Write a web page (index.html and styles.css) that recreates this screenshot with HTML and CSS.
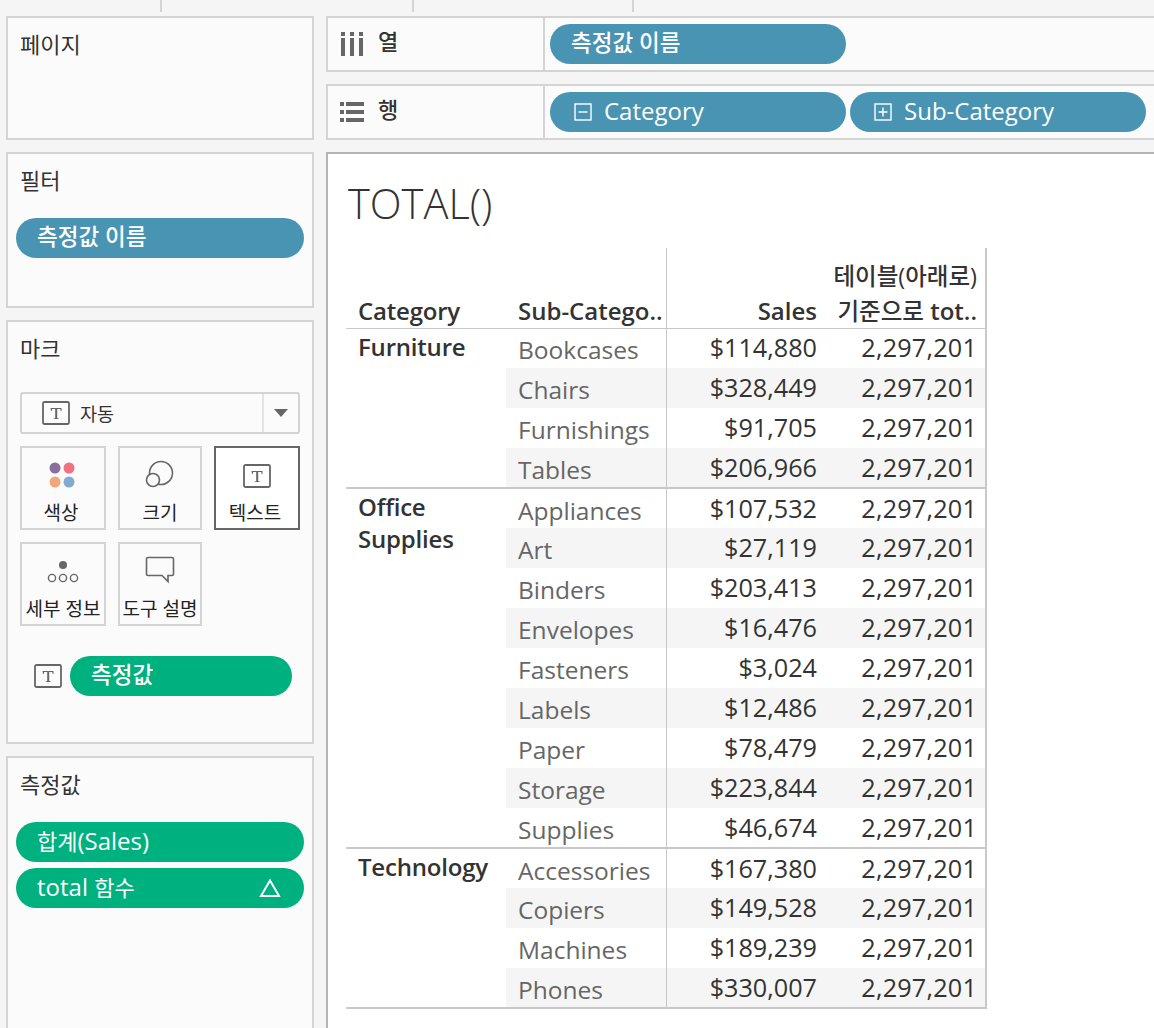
FILE: index.html
```html
<!DOCTYPE html>
<html lang="ko">

<head>
    <meta charset="UTF-8">
    <title>TOTAL()</title>
    <link rel="stylesheet" href="styles.css">
</head>

<body>
    <div class="ticks">
        <span class="tick t1"></span>
        <span class="tick t2"></span>
        <span class="tick t3"></span>
    </div>

    <div class="workspace">
        <aside class="side">
            <section class="card card-page">
                <h2>페이지</h2>
            </section>

            <section class="card card-filter">
                <h2>필터</h2>
                <div class="pill blue bold">측정값 이름</div>
            </section>

            <section class="card card-marks">
                <h2>마크</h2>
                <div class="mark-select">
                    <div class="mark-select-main">
                        <svg class="t-icon" width="28" height="24" viewBox="0 0 28 24"><use href="#t-box"/></svg>
                        <span>자동</span>
                    </div>
                    <div class="mark-select-arrow"><span class="arrow"></span></div>
                </div>
                <div class="mark-grid">
                    <div class="mark-btn">
                        <svg width="30" height="26" viewBox="0 0 30 26">
                            <circle cx="7" cy="6" r="5.5" fill="#8a6f9c"/>
                            <circle cx="21" cy="6" r="5.5" fill="#f2707f"/>
                            <circle cx="7" cy="20" r="5.5" fill="#f2a67c"/>
                            <circle cx="21" cy="20" r="5.5" fill="#82a9cf"/>
                        </svg>
                        <span class="shift">색상</span>
                    </div>
                    <div class="mark-btn">
                        <svg width="30" height="28" viewBox="0 0 30 28" fill="none" stroke="#666" stroke-width="1.6">
                            <circle cx="16" cy="13" r="11.5"/>
                            <circle cx="8" cy="20" r="6.5" fill="#fbfbfb"/>
                        </svg>
                        <span>크기</span>
                    </div>
                    <div class="mark-btn active">
                        <svg class="t-icon" width="28" height="24" viewBox="0 0 28 24"><use href="#t-box"/></svg>
                        <span class="shift">텍스트</span>
                    </div>
                    <div class="mark-btn">
                        <svg width="32" height="24" viewBox="0 0 32 24" fill="none" stroke="#666" stroke-width="1.4">
                            <circle cx="16" cy="5" r="4" fill="#666" stroke="none"/>
                            <circle cx="5" cy="18" r="3.6"/>
                            <circle cx="16" cy="18" r="3.6"/>
                            <circle cx="27" cy="18" r="3.6"/>
                        </svg>
                        <span>세부 정보</span>
                    </div>
                    <div class="mark-btn">
                        <svg width="30" height="28" viewBox="0 0 30 28" fill="none" stroke="#666" stroke-width="1.6">
                            <path d="M3 1.5h24a1.5 1.5 0 0 1 1.500 1.500v15a1.500 1.500 0 0 1-1.500 1.500h-4v6l-6-6H3a1.500 1.500 0 0 1-1.500-1.500V3A1.500 1.500 0 0 1 3 1.500z"/>
                        </svg>
                        <span>도구 설명</span>
                    </div>
                </div>
                <div class="mark-field">
                    <svg class="t-icon" width="28" height="24" viewBox="0 0 28 24"><use href="#t-box"/></svg>
                    <div class="pill green bold">측정값</div>
                </div>
            </section>

            <section class="card card-values">
                <h2>측정값</h2>
                <div class="pill green"><span><span class="ko">합계</span>(Sales)</span></div>
                <div class="pill green">
                    <span>total <span class="ko">함수</span></span>
                    <svg class="delta" width="22" height="20" viewBox="0 0 22 20" fill="none" stroke="#fff" stroke-width="2">
                        <path d="M11 2.500L20 18H2z"/>
                    </svg>
                </div>
            </section>
        </aside>

        <main class="content">
            <div class="shelf">
                <div class="shelf-label">
                    <svg width="24" height="24" viewBox="-1 0 24 24" fill="#666">
                        <rect x="0" y="0" width="4" height="4"/><rect x="0" y="6" width="4" height="18"/>
                        <rect x="9" y="0" width="4" height="4"/><rect x="9" y="6" width="4" height="18"/>
                        <rect x="18" y="0" width="4" height="4"/><rect x="18" y="6" width="4" height="18"/>
                    </svg>
                    <span>열</span>
                </div>
                <div class="shelf-pills">
                    <div class="pill blue bold">측정값 이름</div>
                </div>
            </div>

            <div class="shelf">
                <div class="shelf-label">
                    <svg width="24" height="20" viewBox="0 0 24 20" fill="#666">
                        <rect x="0" y="0" width="4" height="4"/><rect x="6" y="0" width="18" height="4"/>
                        <rect x="0" y="8" width="4" height="4"/><rect x="6" y="8" width="18" height="4"/>
                        <rect x="0" y="16" width="4" height="4"/><rect x="6" y="16" width="18" height="4"/>
                    </svg>
                    <span>행</span>
                </div>
                <div class="shelf-pills">
                    <div class="pill blue">
                        <svg class="fold" width="18" height="18" viewBox="0 0 18 18" fill="none" stroke="#fff" stroke-width="1.4">
                            <rect x="1" y="1" width="16" height="16"/><path d="M4.500 9h9"/>
                        </svg>
                        Category
                    </div>
                    <div class="pill blue">
                        <svg class="fold" width="18" height="18" viewBox="0 0 18 18" fill="none" stroke="#fff" stroke-width="1.4">
                            <rect x="1" y="1" width="16" height="16"/><path d="M4.500 9h9M9 4.500v9"/>
                        </svg>
                        Sub-Category
                    </div>
                </div>
            </div>

            <section class="view">
                <h1>TOTAL()</h1>
                <table class="crosstab">
                    <thead>
                        <tr>
                            <th class="cat">Category</th>
                            <th class="sub">Sub-Catego..</th>
                            <th class="num">Sales</th>
                            <th class="num"><span class="head-line">테이블(아래로)</span><span class="ko-head">기준으로</span> tot..</th>
                        </tr>
                    </thead>
                    <tbody>
                        <tr><td class="cat" rowspan="4">Furniture</td><td class="sub">Bookcases</td><td class="num">$114,880</td><td class="num">2,297,201</td></tr>
                        <tr class="band"><td class="sub">Chairs</td><td class="num">$328,449</td><td class="num">2,297,201</td></tr>
                        <tr><td class="sub">Furnishings</td><td class="num">$91,705</td><td class="num">2,297,201</td></tr>
                        <tr class="band"><td class="sub">Tables</td><td class="num">$206,966</td><td class="num">2,297,201</td></tr>
                    </tbody>
                    <tbody>
                        <tr><td class="cat" rowspan="9">Office<br>Supplies</td><td class="sub">Appliances</td><td class="num">$107,532</td><td class="num">2,297,201</td></tr>
                        <tr class="band"><td class="sub">Art</td><td class="num">$27,119</td><td class="num">2,297,201</td></tr>
                        <tr><td class="sub">Binders</td><td class="num">$203,413</td><td class="num">2,297,201</td></tr>
                        <tr class="band"><td class="sub">Envelopes</td><td class="num">$16,476</td><td class="num">2,297,201</td></tr>
                        <tr><td class="sub">Fasteners</td><td class="num">$3,024</td><td class="num">2,297,201</td></tr>
                        <tr class="band"><td class="sub">Labels</td><td class="num">$12,486</td><td class="num">2,297,201</td></tr>
                        <tr><td class="sub">Paper</td><td class="num">$78,479</td><td class="num">2,297,201</td></tr>
                        <tr class="band"><td class="sub">Storage</td><td class="num">$223,844</td><td class="num">2,297,201</td></tr>
                        <tr><td class="sub">Supplies</td><td class="num">$46,674</td><td class="num">2,297,201</td></tr>
                    </tbody>
                    <tbody>
                        <tr><td class="cat" rowspan="4">Technology</td><td class="sub">Accessories</td><td class="num">$167,380</td><td class="num">2,297,201</td></tr>
                        <tr class="band"><td class="sub">Copiers</td><td class="num">$149,528</td><td class="num">2,297,201</td></tr>
                        <tr><td class="sub">Machines</td><td class="num">$189,239</td><td class="num">2,297,201</td></tr>
                        <tr class="band"><td class="sub">Phones</td><td class="num">$330,007</td><td class="num">2,297,201</td></tr>
                    </tbody>
                </table>
            </section>
        </main>
    </div>

    <svg class="defs" width="0" height="0">
        <symbol id="t-box" viewBox="0 0 28 24">
            <rect x="1" y="1" width="26" height="22" rx="1.500" fill="none" stroke="#666" stroke-width="1.800"/>
            <path d="M8.500 7h11v3h-.8l-.5-2h-3v9l1.500.5v.5h-5v-.5l1.500-.5V8h-3l-.5 2h-.7z" fill="#666"/>
        </symbol>
    </svg>
</body>

</html>
```

FILE: styles.css
```css
* {
    box-sizing: border-box;
}

html,
body {
    height: 100%;
}

body {
    margin: 0;
    height: 1028px;
    overflow: hidden;
    background-color: #f5f5f5;
    color: #333;
    font-family: "Open Sans", "Noto Sans CJK KR", sans-serif;
    font-size: 24px;
}

.defs {
    display: block;
}

.ticks {
    display: flex;
    height: 16px;
}

.tick {
    width: 2px;
    height: 12px;
    background-color: #d4d4d4;
}

.t1 {
    margin-left: 160px;
}

.t2 {
    margin-left: 250px;
}

.t3 {
    margin-left: 218px;
}

.workspace {
    display: grid;
    grid-template-columns: 308px 1fr;
    column-gap: 12px;
    padding-left: 6px;
    height: 1012px;
}

/* left column */
.side {
    display: flex;
    flex-direction: column;
    gap: 12px;
    min-height: 0;
}

.card {
    background-color: #fbfbfb;
    border: 2px solid #d4d4d4;
    padding: 0 8px;
}

.card h2 {
    margin: 0;
    padding: 10px 4px 0;
    font-size: 22px;
    line-height: 32px;
    font-weight: 400;
    color: #333;
}

.card-page {
    height: 124px;
}

.card-filter {
    height: 156px;
}

.card-filter .pill {
    margin-top: 22px;
}

.card-marks {
    height: 424px;
}

.card-values {
    flex: 1;
    border-bottom: 0;
}

.card-values .pill {
    margin-top: 6px;
}

.card-values h2 {
    margin-bottom: 22px;
}

/* pills */
.pill {
    display: flex;
    align-items: center;
    gap: 12px;
    height: 40px;
    padding: 0 0 2px 21px;
    border-radius: 20px;
    color: #fff;
    font-size: 24px;
    line-height: 32px;
    white-space: nowrap;
}

.pill.bold {
    font-size: 22.500px;
    font-weight: 500;
}

.pill svg {
    margin-top: 2px;
}

.ko {
    font-size: 22px;
}

.blue {
    background-color: #4a94b3;
}

.green {
    background-color: #00b180;
}

.delta {
    margin-left: auto;
    margin-right: 23px;
}

/* marks card */
.mark-select {
    display: flex;
    height: 42px;
    margin: 28px 4px 0;
    border: 2px solid #d4d4d4;
    border-radius: 3px;
    font-size: 18.500px;
}

.mark-select-main {
    display: flex;
    flex: 1;
    align-items: center;
    gap: 10px;
    padding: 0 0 1px 20px;
}

.mark-select-arrow {
    display: flex;
    align-items: center;
    justify-content: center;
    width: 36px;
    border-left: 2px solid #e4e4e4;
}

.arrow {
    border-left: 7px solid transparent;
    border-right: 7px solid transparent;
    border-top: 8px solid #666;
}

.mark-grid {
    display: grid;
    grid-template-columns: 86px 84px 86px;
    grid-auto-rows: 84px;
    gap: 12px;
    margin: 12px 4px 0;
}

.mark-btn {
    display: flex;
    flex-direction: column;
    align-items: center;
    justify-content: flex-end;
    gap: 11px;
    padding-bottom: 1px;
    border: 2px solid #d4d4d4;
    font-size: 19px;
    line-height: 28px;
    color: #222;
    white-space: nowrap;
}

.mark-btn .shift {
    margin-right: 4px;
}

.mark-btn.active {
    background-color: #fff;
    border-color: #666;
}

.mark-field {
    display: flex;
    align-items: center;
    gap: 8px;
    margin: 30px 12px 0 18px;
}

.mark-field .pill {
    flex: 1;
}

.t-icon {
    flex: none;
}

/* right column */
.content {
    display: flex;
    flex-direction: column;
    gap: 12px;
    min-width: 0;
}

.shelf {
    display: flex;
    flex: none;
    height: 56px;
    background-color: #fbfbfb;
    border: 2px solid #d4d4d4;
    border-right: 0;
}

.shelf-label {
    display: flex;
    align-items: center;
    gap: 14px;
    width: 217px;
    padding-left: 12px;
    border-right: 2px solid #d4d4d4;
    font-size: 22px;
    line-height: 32px;
    font-weight: 500;
}

.shelf-label span {
    margin-bottom: 6px;
}

.shelf-pills {
    display: flex;
    gap: 4px;
    padding: 6px 0 0 5px;
}

.shelf-pills .pill {
    width: 296px;
}

.fold {
    margin-left: 3px;
}

.view {
    flex: 1;
    background-color: #fff;
    border: 2px solid #b4b4b4;
    border-right: 0;
    border-bottom: 0;
    padding: 0 0 0 18px;
    min-height: 0;
}

.view h1 {
    margin: 0;
    padding: 22px 0 0 2px;
    height: 94px;
    font-size: 41.600px;
    line-height: 54px;
    font-weight: 300;
    color: #333;
}

/* crosstab */
.crosstab {
    border-collapse: collapse;
    table-layout: fixed;
    width: 640px;
    border-right: 2px solid #c8c8c8;
    font-size: 24px;
    line-height: 32px;
}

.crosstab th,
.crosstab td {
    padding: 0;
    height: 40px;
}

.crosstab th {
    height: 80px;
    vertical-align: bottom;
    padding-bottom: 1px;
    font-weight: 600;
    line-height: 32px;
    border-bottom: 1px solid #c8c8c8;
    white-space: nowrap;
}

.head-line {
    display: block;
    margin-bottom: 3px;
    font-size: 23.500px;
    font-weight: 500;
}

.ko-head {
    font-size: 23.500px;
    font-weight: 500;
}

.crosstab .cat {
    width: 160px;
    padding-left: 12px;
    text-align: left;
    font-weight: 600;
    line-height: 32px;
    letter-spacing: -.2px;
    color: #333;
}

.crosstab td.cat {
    padding-top: 2px;
    vertical-align: top;
}

.crosstab .sub {
    width: 160px;
    padding-left: 12px;
    text-align: left;
    color: #666;
    border-right: 1px solid #c8c8c8;
}

.crosstab th.sub {
    color: #333;
}

.crosstab td.sub {
    padding-top: 4px;
    font-size: 24.500px;
}

.crosstab .num {
    width: 160px;
    padding-right: 9px;
    text-align: right;
}

.crosstab .num:last-child {
    padding-right: 8px;
}

.crosstab td.num {
    padding-bottom: 2px;
    font-size: 25.200px;
}

.crosstab td.num:last-child {
    letter-spacing: .2px;
}

.crosstab tbody {
    border-bottom: 2px solid #c8c8c8;
}

.band td:not(.cat) {
    background-color: #f5f5f5;
}
```
